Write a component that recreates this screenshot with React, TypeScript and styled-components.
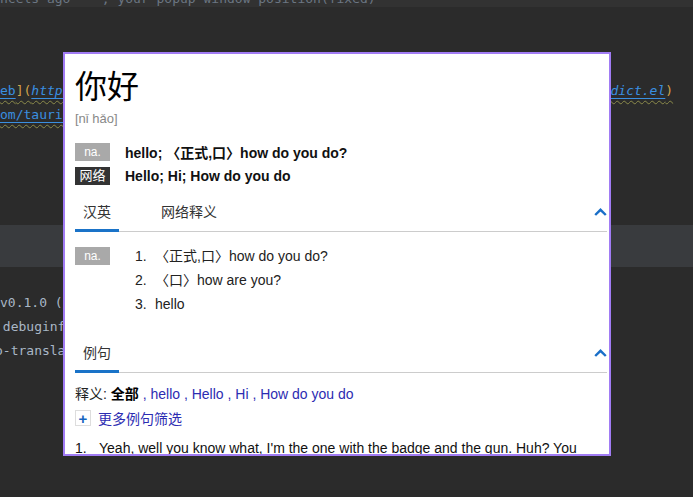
import React from "react";
import styled, { createGlobalStyle } from "styled-components";

const Global = createGlobalStyle`
  html, body { margin: 0; padding: 0; background: #2b2b2b; }
  body { width: 693px; height: 497px; overflow: hidden; }
`;

const Screen = styled.div`
  position: relative;
  width: 693px;
  height: 497px;
  overflow: hidden;
  background: #2b2b2b;
  font-family: "DejaVu Sans Mono", "Liberation Mono", monospace;
`;

const TopStrip = styled.div`
  height: 7px;
  background: #323232;
  overflow: hidden;
`;

const StripText = styled.div`
  font-size: 13px;
  line-height: 16px;
  margin-top: -9px;
  white-space: pre;
  color: #6b7682;
`;

const CodeLine = styled.div<{ $indent?: number }>`
  height: 24px;
  line-height: 24px;
  font-size: 13px;
  white-space: pre;
  color: #a9b7c6;
  text-indent: ${(p) => p.$indent ?? 0}px;
`;

const Band = styled.div`
  margin-top: 2px;
  height: 42px;
  background: #393b3e;
`;

const Squiggle = styled.span`
  text-decoration: underline wavy #8b8a4a;
  text-decoration-thickness: 1px;
  text-underline-offset: 5px;
`;

const Link = styled.span<{ $italic?: boolean }>`
  color: #3a8fe0;
  font-style: ${(p) => (p.$italic ? "italic" : "normal")};
  text-decoration: underline solid #3a8fe0;
  text-underline-offset: 3px;
`;

const Bracket = styled.span`
  color: #d2a34c;
`;

const Popup = styled.div`
  position: absolute;
  left: 63px;
  top: 52px;
  width: 548px;
  height: 404px;
  box-sizing: border-box;
  border: 2px solid #a17cf4;
  background: #fff;
  overflow: hidden;
  padding: 10px 2px 0 10px;
  font-family: "Liberation Sans", "Noto Sans CJK SC", sans-serif;
  color: #222;
`;

const Word = styled.h1`
  margin: 0;
  font-family: "Noto Sans CJK SC", sans-serif;
  font-weight: 400;
  font-size: 32px;
  line-height: 40px;
  color: #000;
`;

const Phonetic = styled.div`
  margin-top: 6px;
  font-size: 13px;
  line-height: 18px;
  color: #888;
`;

const Summary = styled.div`
  margin-top: 12px;
`;

const SumRow = styled.div`
  display: flex;
  align-items: center;
  height: 24px;
  gap: 15px;
`;

const Tag = styled.span<{ $dark?: boolean; $top?: number }>`
  flex: none;
  display: inline-flex;
  align-items: center;
  justify-content: center;
  width: 35px;
  height: 18px;
  margin-top: ${(p) => p.$top ?? 0}px;
  background: ${(p) => (p.$dark ? "#333" : "#a9a9a9")};
  color: #fff;
  font-size: ${(p) => (p.$dark ? "13px" : "12px")};
  line-height: 18px;
`;

const SumText = styled.span`
  font-weight: bold;
  font-size: 14px;
  color: #111;
`;

const TabBar = styled.div<{ $mt: number }>`
  display: flex;
  align-items: flex-end;
  border-bottom: 1px solid #ccc;
  margin-top: ${(p) => p.$mt}px;
`;

const Tab = styled.div<{ $active?: boolean }>`
  padding: 10px 8px 7px;
  line-height: 20px;
  font-size: 14px;
  color: #333;
  border-bottom: 3px solid ${(p) => (p.$active ? "#1a73c8" : "transparent")};
  margin-bottom: -1px;
  & + & {
    margin-left: 34px;
  }
`;

const Collapse = styled.div`
  margin-left: auto;
  align-self: center;
  display: flex;
  width: 13px;
  height: 8px;
`;

const DefSection = styled.div`
  display: flex;
  align-items: flex-start;
  gap: 25px;
  padding-top: 12px;
`;

const DefList = styled.ol`
  margin: 0;
  padding: 0;
  list-style: none;
`;

const DefItem = styled.li`
  display: flex;
  line-height: 24px;
  font-size: 14px;
  color: #222;
`;

const Num = styled.span<{ $w: number }>`
  flex: none;
  width: ${(p) => p.$w}px;
`;

const ExampleBody = styled.div`
  padding-top: 9px;
`;

const FilterLine = styled.div`
  line-height: 24px;
  font-size: 14px;
  color: #222;
`;

const Strong = styled.b`
  color: #000;
`;

const Blue = styled.span`
  color: #2c2cb2;
`;

const MoreRow = styled.div`
  display: flex;
  align-items: center;
  gap: 7px;
  height: 24px;
  font-size: 14px;
  color: #2c2cb2;
`;

const PlusBox = styled.span`
  box-sizing: border-box;
  width: 16px;
  height: 16px;
  border: 1px solid #ddd;
  display: flex;
  align-items: center;
  justify-content: center;
  color: #1565c0;
  font-weight: bold;
  font-size: 15px;
  line-height: 1;
`;

const Sentence = styled.div`
  display: flex;
  margin-top: 6px;
  line-height: 24px;
  font-size: 14px;
  color: #111;
  white-space: nowrap;
`;

const Chevron = () => (
  <svg width="13" height="8" viewBox="0 0 13 8">
    <path d="M1.2 7 L6.5 1.8 L11.8 7" fill="none" stroke="#1a6fc8" strokeWidth="2.4" />
  </svg>
);

export default function App() {
  return (
    <>
      <Global />
      <Screen>
        <TopStrip>
          <StripText>{"ncels ago    ; your popup window position(fixed)"}</StripText>
        </TopStrip>
        <CodeLine />
        <CodeLine />
        <CodeLine />
        <CodeLine>
          <Squiggle>
            <Link>eb</Link>
            <Bracket>](</Bracket>
            <Link $italic>https://github.com/lorniu/go-translate/blob/master/gt-extension-youdao-webdict.el</Link>
            <Bracket>)</Bracket>
          </Squiggle>
        </CodeLine>
        <CodeLine>
          <Squiggle>
            <Link>om/tauri-apps/tauri</Link>
          </Squiggle>
        </CodeLine>
        <CodeLine />
        <CodeLine />
        <CodeLine />
        <CodeLine />
        <Band />
        <CodeLine />
        <CodeLine>{"v0.1.0 (/home/dev/projects/translate)"}</CodeLine>
        <CodeLine $indent={-5}>{" debuginfo] target(s) in 0.52s"}</CodeLine>
        <CodeLine $indent={-5}>{"o-translate`"}</CodeLine>

        <Popup>
          <Word>你好</Word>
          <Phonetic>[nǐ hǎo]</Phonetic>
          <Summary>
            <SumRow>
              <Tag>na.</Tag>
              <SumText>hello; 〈正式,口〉how do you do?</SumText>
            </SumRow>
            <SumRow>
              <Tag $dark>网络</Tag>
              <SumText>Hello; Hi; How do you do</SumText>
            </SumRow>
          </Summary>

          <TabBar $mt={4}>
            <Tab $active>汉英</Tab>
            <Tab>网络释义</Tab>
            <Collapse>
              <Chevron />
            </Collapse>
          </TabBar>

          <DefSection>
            <Tag $top={3}>na.</Tag>
            <DefList>
              <DefItem>
                <Num $w={20}>1.</Num>〈正式,口〉how do you do?
              </DefItem>
              <DefItem>
                <Num $w={20}>2.</Num>〈口〉how are you?
              </DefItem>
              <DefItem>
                <Num $w={20}>3.</Num>hello
              </DefItem>
            </DefList>
          </DefSection>

          <TabBar $mt={17}>
            <Tab $active>例句</Tab>
            <Collapse>
              <Chevron />
            </Collapse>
          </TabBar>

          <ExampleBody>
            <FilterLine>
              释义: <Strong>全部</Strong>
              <Blue> , hello , Hello , Hi , How do you do</Blue>
            </FilterLine>
            <MoreRow>
              <PlusBox>+</PlusBox>
              更多例句筛选
            </MoreRow>
            <Sentence>
              <Num $w={24}>1.</Num>
              Yeah, well you know what, I'm the one with the badge and the gun. Huh? You
            </Sentence>
          </ExampleBody>
        </Popup>
      </Screen>
    </>
  );
}
